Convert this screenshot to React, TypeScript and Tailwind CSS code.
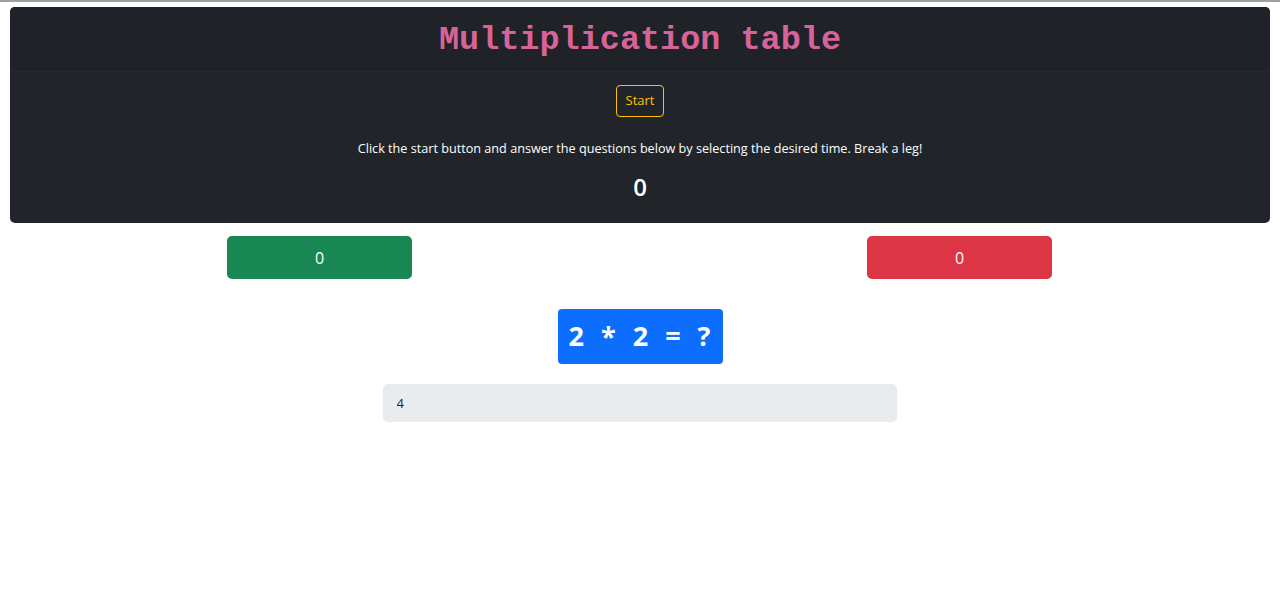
import { useState } from "react";

export default function App() {
    const [answer, setAnswer] = useState("4");

    return (
        <div className="min-h-screen w-full bg-white border-t-2 border-[#a0a0a0] font-['Open_Sans','Noto_Sans',sans-serif]">
            <div className="px-[10px] pt-[5px]">
                <div className="bg-[#212529] rounded-[5px] overflow-hidden">
                    <div className="h-[65px] flex items-center justify-center bg-[#1f2327] border-b border-[#25292d]">
                        <h2 className="font-['Liberation_Mono','Courier_New',monospace] font-bold text-[33.5px] text-[#d6649a] leading-none pt-[3px]">Multiplication table</h2>
                    </div>
                    <div className="flex flex-col items-center pt-[13px] pb-[24px]">
                        <button className="h-[32px] px-[9px] text-[13px] text-[#ffc107] border border-[#ffc107] rounded-[4px]">Start</button>
                        <p className="mt-[21px] text-[12.65px] text-white leading-5">Click the start button and answer the questions below by selecting the desired time. Break a leg!</p>
                        <h4 className="mt-[17px] text-[24px] font-semibold text-white leading-none">0</h4>
                    </div>
                </div>
            </div>

            <div className="grid grid-cols-2 mt-[13px]">
                <div className="flex justify-center">
                    <div className="w-[185px] h-[43px] ml-[-1px] flex items-center justify-center bg-[#198754] text-white text-[16px] rounded-[5px]">0</div>
                </div>
                <div className="flex justify-center">
                    <div className="w-[185px] h-[43px] ml-[-1px] flex items-center justify-center bg-[#dc3545] text-white text-[16px] rounded-[5px]">0</div>
                </div>
            </div>

            <div className="flex justify-center mt-[30px]">
                <div className="w-[165px] h-[55px] flex items-center justify-center bg-[#0d6efd] text-white text-[27px] font-bold rounded-[4px] whitespace-pre tracking-[1px]">2  *  2  =  ?</div>
            </div>

            <div className="flex justify-center mt-[20px]">
                <input
                    value={answer}
                    onChange={(e) => setAnswer(e.target.value)}
                    className="w-[514px] h-[38px] ml-[-1px] px-[14px] bg-[#e9ecef] text-[13px] text-[#212529] rounded-[5px] outline-none"
                />
            </div>
        </div>
    );
}
